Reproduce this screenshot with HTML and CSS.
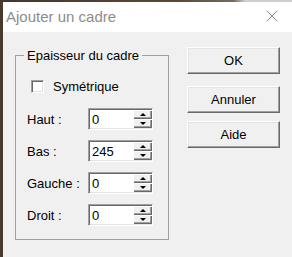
FILE: index.html
```html
<!DOCTYPE html>
<html>
<head>
  <title>Ajouter un cadre</title>
  <link rel="stylesheet" href="styles.css">
</head>
<body>
  <div class="strip"></div>
  <div class="window">
    <div class="titlebar">
      <span class="title">Ajouter un cadre</span>
      <svg class="close" width="12" height="12" viewBox="0 0 12 12">
        <path d="M0.5 0.5 L11.5 11.5 M11.5 0.5 L0.5 11.5" stroke="#8c8c8c" stroke-width="1" fill="none"/>
      </svg>
    </div>
    <div class="content">
      <fieldset class="group">
        <legend>Epaisseur du cadre</legend>
        <label class="check"><span class="box"></span>Symétrique</label>
        <div class="fields">
          <span class="lbl">Haut :</span>
          <div class="spin"><span class="val">0</span><span class="arrows"><span class="arrow"><i class="up"></i></span><span class="arrow"><i class="down"></i></span></span></div>
          <span class="lbl">Bas :</span>
          <div class="spin"><span class="val">245</span><span class="arrows"><span class="arrow"><i class="up"></i></span><span class="arrow"><i class="down"></i></span></span></div>
          <span class="lbl">Gauche :</span>
          <div class="spin"><span class="val">0</span><span class="arrows"><span class="arrow"><i class="up"></i></span><span class="arrow"><i class="down"></i></span></span></div>
          <span class="lbl">Droit :</span>
          <div class="spin"><span class="val">0</span><span class="arrows"><span class="arrow"><i class="up"></i></span><span class="arrow"><i class="down"></i></span></span></div>
        </div>
      </fieldset>
      <div class="buttons">
        <button class="btn btn-ok">OK</button>
        <button class="btn btn-cancel">Annuler</button>
        <button class="btn">Aide</button>
      </div>
    </div>
  </div>
</body>
</html>
```

FILE: styles.css
```css
body {
  margin: 0;
  font-family: "Liberation Sans", Arial, sans-serif;
  font-size: 13px;
  color: #000;
  background-color: #f0f0f0;
}
.strip {
  height: 2px;
  background: linear-gradient(to right, #46372b 0, #5a4736 60%, #7a6a5a 80%, #cfcfcf 84%);
}
.window {
  height: 255px;
  display: flex;
  flex-direction: column;
  border-left: 3px solid #4a3a2d;
}
.titlebar {
  height: 30px;
  background-color: #fff;
  display: flex;
  align-items: flex-start;
  padding-left: 3px;
}
.title {
  font-size: 15px;
  line-height: 30px;
  color: #8c8c8c;
}
.close {
  margin-left: auto;
  margin-right: 14px;
  margin-top: 8px;
}
.content {
  flex: 1;
  display: flex;
  align-items: flex-start;
  padding-left: 12px;
  background-color: #f0f0f0;
}
.group {
  margin: 16px 0 0 0;
  padding: 0 0 0 8px;
  width: 154px;
  height: 192px;
  box-sizing: border-box;
  border: 1px solid #a0a0a0;
  min-width: 0;
}
.group legend {
  padding: 0 3px;
  line-height: 15px;
}
.check {
  display: flex;
  align-items: center;
  margin: 16px 0 0 7px;
  line-height: 15px;
}
.box {
  width: 13px;
  height: 13px;
  box-sizing: border-box;
  background-color: #fff;
  border: 1px solid;
  border-color: #a0a0a0 #fff #fff #a0a0a0;
  box-shadow: inset 1px 1px #696969, inset -1px -1px #e3e3e3;
  margin-right: 9px;
}
.fields {
  display: grid;
  grid-template-columns: 61px 65px;
  grid-auto-rows: 22px;
  row-gap: 10px;
  align-items: center;
  margin: 14px 0 0 3px;
}
.spin {
  height: 22px;
  box-sizing: border-box;
  display: flex;
  background-color: #fff;
  border: 1px solid;
  border-color: #a0a0a0 #fff #fff #a0a0a0;
  box-shadow: inset 1px 1px #696969, inset -1px -1px #e3e3e3;
  padding: 1px 0 1px 1px;
}
.val {
  flex: 1;
  padding-left: 2px;
  line-height: 19px;
}
.arrows {
  width: 19px;
  display: flex;
  flex-direction: column;
}
.arrow {
  flex: 1;
  display: flex;
  align-items: center;
  justify-content: center;
  background-color: #f0f0f0;
  box-shadow: inset 1px 1px #fff, inset -1px -1px #696969, inset -2px -2px #a0a0a0;
}
.up,
.down {
  width: 0;
  height: 0;
  border-left: 3px solid transparent;
  border-right: 3px solid transparent;
}
.up {
  border-bottom: 3px solid #000;
}
.down {
  border-top: 3px solid #000;
}
.buttons {
  display: flex;
  flex-direction: column;
  margin: 15px 0 0 18px;
}
.btn {
  width: 93px;
  height: 27px;
  box-sizing: border-box;
  font-family: "Liberation Sans", Arial, sans-serif;
  font-size: 13px;
  color: #000;
  padding: 0;
  background-color: #f0f0f0;
  border: 1px solid;
  border-color: #fff #696969 #696969 #fff;
  box-shadow: inset -1px -1px #a0a0a0, inset 1px 1px #e3e3e3;
}
.btn-ok {
  margin-bottom: 12px;
}
.btn-cancel {
  margin-bottom: 8px;
}
```
